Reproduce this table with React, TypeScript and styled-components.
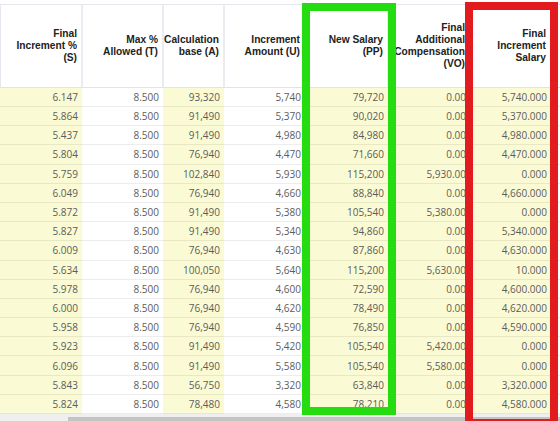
import React from "react";
import styled, { createGlobalStyle } from "styled-components";

const GlobalStyle = createGlobalStyle`
  html, body { margin: 0; padding: 0; background: #ffffff; }
  #root { width: 560px; height: 421px; }
`;

const COLS = "82px 81px 61px 81px 83px 82px 81px 1fr";

type Col = { lines: string[]; tint: boolean };

const columns: Col[] = [
  { lines: ["Final", "Increment %", "(S)"], tint: true },
  { lines: ["Max %", "Allowed (T)"], tint: false },
  { lines: ["Calculation", "base (A)"], tint: true },
  { lines: ["Increment", "Amount (U)"], tint: false },
  { lines: ["New Salary", "(PP)"], tint: true },
  { lines: ["Final", "Additional", "Compensation", "(VO)"], tint: true },
  { lines: ["Final", "Increment", "Salary"], tint: true },
  { lines: [], tint: false },
];

const rows: string[][] = [
  ["6.147", "8.500", "93,320", "5,740", "79,720", "0.00", "5,740.000"],
  ["5.864", "8.500", "91,490", "5,370", "90,020", "0.00", "5,370.000"],
  ["5.437", "8.500", "91,490", "4,980", "84,980", "0.00", "4,980.000"],
  ["5.804", "8.500", "76,940", "4,470", "71,660", "0.00", "4,470.000"],
  ["5.759", "8.500", "102,840", "5,930", "115,200", "5,930.00", "0.000"],
  ["6.049", "8.500", "76,940", "4,660", "88,840", "0.00", "4,660.000"],
  ["5.872", "8.500", "91,490", "5,380", "105,540", "5,380.00", "0.000"],
  ["5.827", "8.500", "91,490", "5,340", "94,860", "0.00", "5,340.000"],
  ["6.009", "8.500", "76,940", "4,630", "87,860", "0.00", "4,630.000"],
  ["5.634", "8.500", "100,050", "5,640", "115,200", "5,630.00", "10.000"],
  ["5.978", "8.500", "76,940", "4,600", "72,590", "0.00", "4,600.000"],
  ["6.000", "8.500", "76,940", "4,620", "78,490", "0.00", "4,620.000"],
  ["5.958", "8.500", "76,940", "4,590", "76,850", "0.00", "4,590.000"],
  ["5.923", "8.500", "91,490", "5,420", "105,540", "5,420.00", "0.000"],
  ["6.096", "8.500", "91,490", "5,580", "105,540", "5,580.00", "0.000"],
  ["5.843", "8.500", "56,750", "3,320", "63,840", "0.00", "3,320.000"],
  ["5.824", "8.500", "78,480", "4,580", "78,210", "0.00", "4,580.000"],
];

const Frame = styled.div`
  position: relative;
  width: 560px;
  height: 421px;
  overflow: hidden;
  background: #ffffff;
  padding-top: 4px;
  box-sizing: border-box;
  display: flex;
  flex-direction: column;
`;

const HeaderRow = styled.div`
  display: grid;
  grid-template-columns: ${COLS};
  height: 84px;
  box-sizing: border-box;
  border-top: 1px solid #e4e8ee;
  border-bottom: 1px solid #dfe4ea;
  border-left: 1px solid #e4e8ee;
`;

const HeaderCell = styled.div`
  display: flex;
  flex-direction: column;
  justify-content: center;
  align-items: flex-end;
  padding: 0 4px 0 4px;
  border-right: 2px solid #e9ecf1;
  min-width: 0;
  font-family: "Liberation Sans", Arial, sans-serif;
  font-weight: 700;
  font-size: 10.2px;
  line-height: 12px;
  color: #222222;
  text-align: right;
  white-space: nowrap;
`;

const Body = styled.div`
  display: flex;
  flex-direction: column;
`;

const Row = styled.div`
  display: grid;
  grid-template-columns: ${COLS};
  height: 19.2px;
`;

const Cell = styled.div<{ $tint: boolean }>`
  background: ${(p) => (p.$tint ? "#fafad4" : "#ffffff")};
  border-bottom: 1px solid rgba(0, 0, 0, 0.07);
  box-sizing: border-box;
  padding-right: 4px;
  display: flex;
  align-items: center;
  justify-content: flex-end;
  font-family: "Open Sans", "Noto Sans", sans-serif;
  font-size: 10px;
  color: #5c5c5c;
  white-space: nowrap;
  min-width: 0;
`;

const ScrollTrack = styled.div`
  margin-top: auto;
  height: 7px;
  background: #efefef;
  display: flex;
  align-items: flex-end;
`;

const ScrollThumb = styled.div`
  margin-left: 68px;
  flex: 1;
  height: 4px;
  background: #c4c4c4;
`;

const Highlight = styled.div<{ $color: string; $left: number; $top: number; $w: number; $h: number }>`
  position: absolute;
  left: ${(p) => p.$left}px;
  top: ${(p) => p.$top}px;
  width: ${(p) => p.$w}px;
  height: ${(p) => p.$h}px;
  border: 8px solid ${(p) => p.$color};
  box-sizing: border-box;
  pointer-events: none;
`;

export default function App() {
  return (
    <>
      <GlobalStyle />
      <Frame>
        <HeaderRow>
          {columns.map((c, i) => (
            <HeaderCell key={i}>
              {c.lines.map((l, j) => (
                <span key={j}>{l}</span>
              ))}
            </HeaderCell>
          ))}
        </HeaderRow>
        <Body>
          {rows.map((r, i) => (
            <Row key={i}>
              {columns.map((c, j) => (
                <Cell key={j} $tint={c.tint}>
                  {r[j] ?? ""}
                </Cell>
              ))}
            </Row>
          ))}
        </Body>
        <ScrollTrack>
          <ScrollThumb />
        </ScrollTrack>
        <Highlight $color="#24dc10" $left={302} $top={3} $w={94} $h={412} />
        <Highlight $color="#e21b1f" $left={465} $top={2} $w={93} $h={425} />
      </Frame>
    </>
  );
}
